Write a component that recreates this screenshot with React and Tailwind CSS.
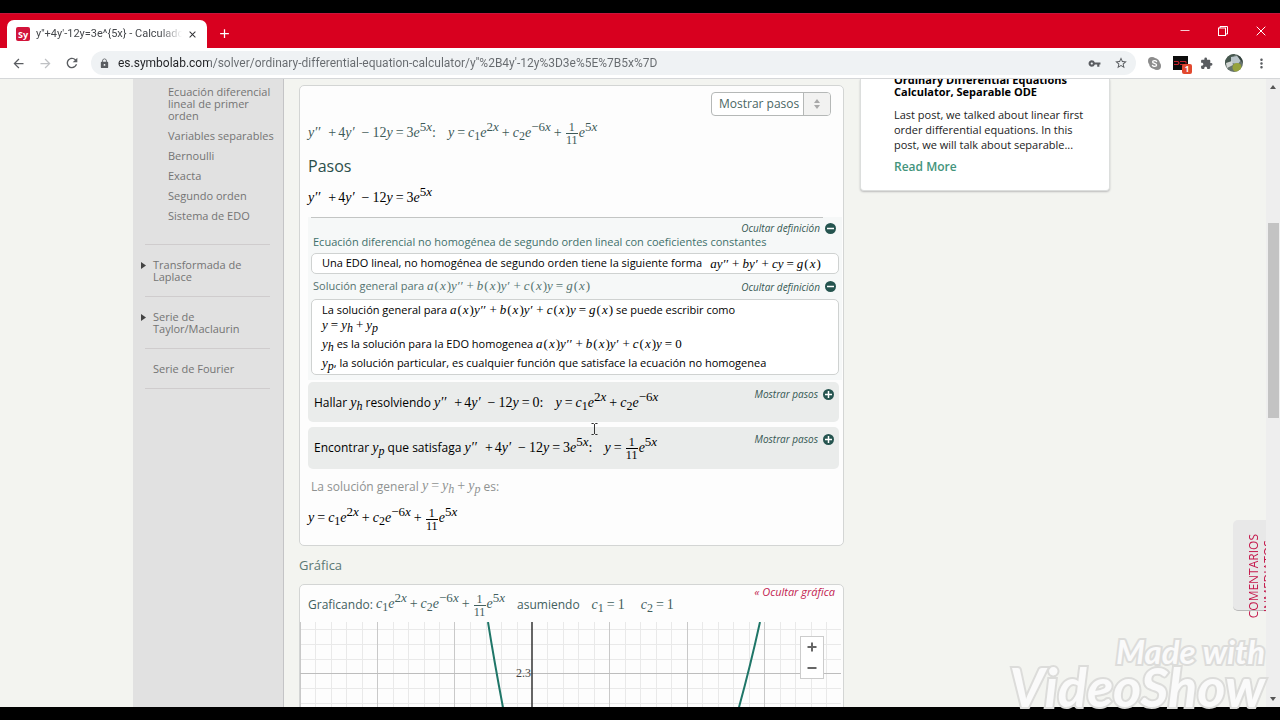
import React from "react";
import {
  MdArrowBack,
  MdArrowForward,
  MdRefresh,
  MdLock,
  MdVpnKey,
  MdStarBorder,
  MdExtension,
  MdMoreVert,
  MdAdd,
  MdClose,
} from "react-icons/md";

/* ---------- math notation ---------- */

function M({ children, small }) {
  return (
    <span
      className={
        small
          ? "whitespace-nowrap font-['Liberation_Serif',serif] text-[13px] leading-[13px] italic"
          : "whitespace-nowrap font-['Liberation_Serif',serif] text-[14px] leading-[14px] italic"
      }
    >
      {children}
    </span>
  );
}
const N = ({ children }) => <span className="not-italic">{children}</span>;
const Op = ({ children }) => <span className="mx-[3px] not-italic">{children}</span>;
const Sup = ({ children }) => (
  <span className="align-[6px] text-[13px] leading-none">{children}</span>
);
const Sub = ({ children }) => (
  <span className="align-[-3px] text-[12px] leading-none">{children}</span>
);
const Prime = ({ children }) => <span className="mr-[1px]">{children}</span>;

function Frac({ top, bottom }) {
  return (
    <span className="mx-px inline-flex flex-col items-center align-middle text-[12px] leading-[12px] not-italic">
      <span className="border-b border-current px-[3px]">{top}</span>
      <span>{bottom}</span>
    </span>
  );
}

const Fn = ({ name }) => (
  <>
    {name}
    <span className="ml-px not-italic">(</span>
    <span className="mx-px">x</span>
    <span className="not-italic">)</span>
  </>
);

const Exp = ({ n }) => (
  <>
    e<Sup><N>{n}</N>x</Sup>
  </>
);

const Lhs = () => (
  <>
    y<Prime>′′</Prime>
    <span className="ml-[7px] mr-[2px] not-italic">+</span>
    <N>4</N>y<Prime>′</Prime>
    <span className="ml-[6px] mr-[3px] not-italic">−</span>
    <N>12</N>y
  </>
);

const Terms = () => (
  <>
    c<Sub><N>1</N></Sub><Exp n="2" />
    <Op>+</Op>c<Sub><N>2</N></Sub><Exp n="−6" />
  </>
);

const Solution = () => (
  <>
    <Terms />
    <Op>+</Op>
    <Frac top="1" bottom="11" />
    <Exp n="5" />
  </>
);

const LinearForm = () => (
  <>
    <Fn name="a" />y<Prime>′′</Prime><Op>+</Op><Fn name="b" />y<Prime>′</Prime><Op>+</Op><Fn name="c" />y<Op>=</Op>
  </>
);

/* ---------- browser chrome ---------- */

function TabStrip() {
  return (
    <div className="flex h-[35px] shrink-0 items-end justify-between border-t border-[#c8143c] bg-[#d8001f] text-white">
      <div className="flex items-end">
        <div className="ml-[7px] flex h-[28px] w-[200px] items-center rounded-t-[7px] bg-white pl-[9px] pr-2 text-[#45484c]">
          <span className="flex size-[14px] shrink-0 items-center justify-center rounded-[2px] bg-[#d2143a] text-[9px] font-bold leading-none text-white">
            Sy
          </span>
          <span className="ml-[6px] w-[146px] overflow-hidden whitespace-nowrap font-['Roboto',sans-serif] text-[11px] [mask-image:linear-gradient(to_right,black_85%,transparent)]">
            y''+4y'-12y=3e^{"{5x}"} - Calculador
          </span>
          <button aria-label="Cerrar pestaña" className="ml-[5px] text-[#2f3033]">
            <MdClose size={11} />
          </button>
        </div>
        <button aria-label="Nueva pestaña" className="mb-[7px] ml-[10px]">
          <MdAdd size={15} />
        </button>
      </div>
      <div className="mb-[11px] mr-[14px] flex items-center gap-[28px]">
        <button aria-label="Minimizar">
          <svg width="10" height="12" viewBox="0 0 10 12" stroke="currentColor"><path d="M0.5 5.5h9" opacity=".8" /></svg>
        </button>
        <button aria-label="Restaurar">
          <svg width="10" height="10" viewBox="0 0 10 10" fill="none" stroke="currentColor">
            <rect x="0.5" y="2" width="7" height="7.5" />
            <path d="M2 2V0.5h7.5V8H7.5" />
          </svg>
        </button>
        <button aria-label="Cerrar">
          <svg width="10" height="10" viewBox="0 0 10 10" stroke="currentColor"><path d="M0.7 0.7l8.6 8.6M9.3 0.7L0.7 9.3" /></svg>
        </button>
      </div>
    </div>
  );
}

function Toolbar() {
  return (
    <div className="flex h-[31px] shrink-0 items-center border-b border-[#d5d7d9] bg-white pl-[11px] pr-[11px] text-[#5a5d61]">
      <button aria-label="Atrás"><MdArrowBack size={15} /></button>
      <button aria-label="Adelante" className="ml-3 text-[#bfc1c4]"><MdArrowForward size={15} /></button>
      <button aria-label="Recargar" className="ml-[11px]"><MdRefresh size={16} /></button>
      <div className="ml-[11px] flex h-[24px] flex-1 items-center rounded-full bg-[#eff2f4] pl-2 pr-2">
        <MdLock size={11} className="shrink-0" />
        <input
          aria-label="Dirección"
          defaultValue="es.symbolab.com/solver/ordinary-differential-equation-calculator/y''%2B4y'-12y%3D3e%5E%7B5x%7D"
          className="ml-2 min-w-0 flex-1 bg-[linear-gradient(to_right,#202124_91px,#666a6e_91px)] bg-clip-text font-['Roboto',sans-serif] text-[12px] text-transparent outline-none"
        />
        <button aria-label="Contraseñas"><MdVpnKey size={13} /></button>
        <button aria-label="Favorito" className="ml-[13px]"><MdStarBorder size={14} /></button>
      </div>
      <div className="ml-3 flex items-center gap-3">
        <button aria-label="Skype">
          <svg width="13" height="13" viewBox="0 0 13 13">
            <circle cx="4" cy="4" r="4" fill="#8c8c8c" />
            <circle cx="9" cy="9" r="4" fill="#8c8c8c" />
            <circle cx="6.5" cy="6.5" r="5.4" fill="#8c8c8c" />
            <path d="M8.6 4.6C8 3.2 4.6 3.2 4.6 5c0 1.700 4 1.100 4 3 0 1.900-3.600 1.800-4.200.3" fill="none" stroke="#fff" strokeWidth="1.300" strokeLinecap="round" />
          </svg>
        </button>
        <button aria-label="Extensión, 1 aviso" className="relative">
          <svg width="15" height="14" viewBox="0 0 15 14">
            <rect width="15" height="14" fill="#0c0c0c" />
            <path d="M1 5.500h4l1 1.500-1 1.500H1M7 5.500h6M7 8.500h4M13 5.500v2" fill="none" stroke="#c4222b" strokeWidth="1.200" />
          </svg>
          <span className="absolute left-[9px] top-[8px] flex size-[10px] items-center justify-center rounded-[2px] bg-[#e2492f] text-[8px] font-bold leading-none text-white">
            1
          </span>
        </button>
        <button aria-label="Extensiones"><MdExtension size={13} /></button>
        <button aria-label="Perfil">
          <svg width="18" height="18" viewBox="0 0 18 18">
            <clipPath id="avatar"><circle cx="9" cy="9" r="9" /></clipPath>
            <g clipPath="url(#avatar)">
              <rect width="18" height="18" fill="#66736d" />
              <path d="M0 0h10l-3 7-7 4z" fill="#46584f" />
              <path d="M6 3l6-1 4 4-3 4-7-1z" fill="#b8c4c9" />
              <path d="M1 9l6-2 1 4-6 3z" fill="#d2d6d4" />
              <circle cx="12" cy="13.500" r="4.500" fill="#96a23c" />
              <path d="M12 1l5 2 1 6-3-3z" fill="#34423e" />
            </g>
          </svg>
        </button>
        <button aria-label="Menú" className="-ml-px"><MdMoreVert size={15} /></button>
      </div>
    </div>
  );
}

/* ---------- page parts ---------- */

const subtopics = [
  "Ecuación diferencial lineal de primer orden",
  "Variables separables",
  "Bernoulli",
  "Exacta",
  "Segundo orden",
  "Sistema de EDO",
];

function Topic({ children, arrow }) {
  return (
    <a href="#" className="flex border-t border-[#cfcccd] pb-[13px] pt-[14px] leading-[12px]">
      <span className="w-2 shrink-0 pt-[3px]">
        {arrow && (
          <svg width="5" height="7" viewBox="0 0 5 7" fill="#444" className="-ml-1"><path d="M0 0l5 3.500L0 7z" /></svg>
        )}
      </span>
      <span>{children}</span>
    </a>
  );
}

function Sidebar() {
  return (
    <nav className="w-[151px] shrink-0 border-r border-[#c4c4c6] bg-[#e1e1e1] pl-3 pr-[13px] text-[11px] text-[#747474]">
      <ul className="-mr-3 flex flex-col gap-2 pb-[22px] pl-[23px] pt-[7px] leading-[12px]">
        {subtopics.map((t) => (
          <li key={t}><a href="#" className="block">{t}</a></li>
        ))}
      </ul>
      <Topic arrow>Transformada de Laplace</Topic>
      <Topic arrow>Serie de Taylor/Maclaurin</Topic>
      <Topic>Serie de Fourier</Topic>
      <div className="border-t border-[#cfcccd]" />
    </nav>
  );
}

function Toggle({ label, open }) {
  return (
    <button className="flex items-center gap-[5px] whitespace-nowrap text-[10px] italic leading-[12px] text-[#365854]">
      {label}
      <svg width="11" height="11" viewBox="0 0 11 11">
        <circle cx="5.500" cy="5.500" r="5.500" fill="#25544f" />
        <path d={open ? "M2 5.500h7" : "M2 5.500h7M5.500 2v7"} stroke="#fff" strokeWidth="1.500" />
      </svg>
    </button>
  );
}

function Steps() {
  return (
    <section className="rounded-[5px] border border-[#d3d5d4] bg-[#fdfdfd] pb-3">
      <div className="flex justify-end pr-3 pt-[6px]">
        <label className="flex h-6 items-stretch overflow-hidden rounded-[4px] border border-[#b5b8b7] bg-white">
          <select aria-label="Pasos" className="appearance-none bg-transparent pl-[7px] pr-[3px] text-[12px] text-[#4a6764] outline-none">
            <option>Mostrar pasos</option>
          </select>
          <span className="pointer-events-none flex w-[27px] items-center justify-center border-l border-[#b5b8b7] bg-[#f2f2f1]">
            <svg width="6" height="10" viewBox="0 0 6 10" fill="#a8a8a8"><path d="M3 0l3 4H0zM3 10l3-4H0z" /></svg>
          </span>
        </label>
      </div>
      <div className="flex h-[34px] items-center pl-2 text-[#3d5a58]">
        <M>
          <Lhs /><Op>=</Op><N>3</N><Exp n="5" /><N>:</N>
          <span className="ml-3">y</span><Op>=</Op><Solution />
        </M>
      </div>
      <h2 className="pl-2 text-[16px] leading-[32px] text-[#2c4f4b]">Pasos</h2>
      <div className="flex h-[35px] items-start pl-2 pt-[3px] text-black">
        <M><Lhs /><Op>=</Op><N>3</N><Exp n="5" /></M>
      </div>

      <div className="ml-2 mr-px bg-[#f6f8f8] px-[3px] pb-[5px]">
        <div className="mr-4 border-t border-[#c3c5c4]" />
        <div className="flex justify-end pr-[3px] pt-[4px]"><Toggle label="Ocultar definición" open /></div>
        <p className="pl-[2px] text-[11px] leading-[16px] text-[#3f706b]">
          Ecuación diferencial no homogénea de segundo orden lineal con coeficientes constantes
        </p>
        <div className="mt-[3px] flex h-[21px] items-center whitespace-nowrap rounded-[5px] border border-[#cfd2d1] bg-white pl-[10px] text-[11px] text-black">
          Una EDO lineal, no homogénea de segundo orden tiene la siguiente forma
          <span className="w-2" />
          <M small>ay<Prime>′′</Prime><Op>+</Op>by<Prime>′</Prime><Op>+</Op>cy<Op>=</Op><Fn name="g" /></M>
        </div>
        <div className="flex h-[25px] items-center justify-between pl-[2px] pr-[3px] text-[11px] text-[#557370]">
          <span>Solución general para <M small><LinearForm /><Fn name="g" /></M></span>
          <Toggle label="Ocultar definición" open />
        </div>
        <div className="flex flex-col rounded-[5px] border border-[#cfd2d1] bg-white py-[1px] pl-[10px] text-[11px] leading-[18px] text-black">
          <div className="h-[17px]">
            La solución general para <M small><LinearForm /><Fn name="g" /></M> se puede escribir como
          </div>
          <div className="h-[17px] leading-[14px]"><M small>y<Op>=</Op>y<Sub>h</Sub><Op>+</Op>y<Sub>p</Sub></M></div>
          <div className="h-[19px]">
            <M small>y<Sub>h</Sub></M> es la solución para la EDO homogenea <M small><LinearForm /><N>0</N></M>
          </div>
          <div className="h-[19px]">
            <M small>y<Sub>p</Sub></M>, la solución particular, es cualquier función que satisface la ecuación no homogenea
          </div>
        </div>
      </div>

      <div className="mt-[2px] flex flex-col gap-[5px] pl-2 pr-[4px] text-[12px] text-black">
        <div className="flex h-10 items-start justify-between rounded-[5px] bg-[#eaeceb] pl-[6px] pr-[5px] pt-[6px]">
          <span className="pt-[2px]">
            Hallar <M>y<Sub>h</Sub></M> resolviendo <M><Lhs /><Op>=</Op><N>0:</N><span className="ml-3">y</span><Op>=</Op><Terms /></M>
          </span>
          <Toggle label="Mostrar pasos" />
        </div>
        <div className="flex h-[42px] items-start justify-between rounded-[5px] bg-[#eaeceb] pl-[6px] pr-[5px] pt-[6px]">
          <span className="pt-[2px]">
            Encontrar <M>y<Sub>p</Sub></M> que satisfaga <M><Lhs /><Op>=</Op><N>3</N><Exp n="5" /><N>:</N><span className="ml-3">y</span><Op>=</Op><Frac top="1" bottom="11" /><Exp n="5" /></M>
          </span>
          <Toggle label="Mostrar pasos" />
        </div>
      </div>
      <p className="flex h-[35px] items-center whitespace-pre pl-[11px] text-[12px] text-[#8f9291]">
        La solución general <M>y<Op>=</Op>y<Sub>h</Sub><Op>+</Op>y<Sub>p</Sub></M> es:
      </p>
      <div className="flex h-[29px] items-center pl-2 text-black">
        <M>y<Op>=</Op><Solution /></M>
      </div>
    </section>
  );
}

const minorX = [15, 31, 46, 62, 93, 108, 124, 139, 170, 186, 201, 217, 247, 263, 278, 294, 325, 340, 356, 371, 402, 418, 433, 449, 480, 495, 511, 526];
const majorX = [0, 77, 154, 309, 387, 464];
const minorY = [7, 22, 37, 66, 81, 96];

function Graph() {
  return (
    <div className="relative">
      <svg width="541" height="110" viewBox="0 0 541 110" className="block max-w-full" fill="none">
        {minorX.map((x) => <path key={x} d={`M${x + 0.5} 0V110`} stroke="#e9e9e9" />)}
        {minorY.map((y) => <path key={y} d={`M0 ${y + 0.5}H541`} stroke="#e9e9e9" />)}
        {majorX.map((x) => <path key={x} d={`M${x + 0.5} 0V110`} stroke="#c9c9c9" />)}
        <path d="M0 51.500H541" stroke="#bdbdbd" />
        <path d="M232 0V110" stroke="#333" strokeWidth="1.500" />
        <text x="216" y="55" fontSize="12" fill="#444" fontFamily="Liberation Serif, serif">2.3</text>
        <path d="M188 0Q195 44 205 96" stroke="#1f7668" strokeWidth="2" />
        <path d="M460 0Q449 50 436 96" stroke="#1f7668" strokeWidth="2" />
      </svg>
      <div className="absolute right-[17px] top-[14px] flex h-[43px] w-6 flex-col items-center justify-around border border-[#cccccc] bg-white text-[#666]">
        <button aria-label="Acercar"><svg width="10" height="10" viewBox="0 0 10 10" stroke="currentColor" strokeWidth="2"><path d="M0.500 5h9M5 0.500v9" /></svg></button>
        <button aria-label="Alejar"><svg width="10" height="10" viewBox="0 0 10 10" stroke="currentColor" strokeWidth="2"><path d="M0.500 5h9" /></svg></button>
      </div>
    </div>
  );
}

function GraphCard() {
  return (
    <section className="rounded-[5px] border border-[#d3d5d4] bg-[#fdfdfd] pr-[2px]">
      <div className="flex h-[37px] justify-between pl-2 pr-[6px] text-[12px] text-[#42605e]">
        <div className="flex items-center whitespace-pre pt-[2px]">
          Graficando: <M><Solution /></M>
          <span className="ml-3">asumiendo</span>
          <span className="ml-3"><M>c<Sub><N>1</N></Sub><Op>=</Op><N>1</N></M></span>
          <span className="ml-4"><M>c<Sub><N>2</N></Sub><Op>=</Op><N>1</N></M></span>
        </div>
        <a href="#" className="text-[11px] italic leading-[14px] text-[#c22350]">« Ocultar gráfica</a>
      </div>
      <Graph />
    </section>
  );
}

function BlogCard() {
  return (
    <aside className="w-[250px] shrink-0 self-start rounded-b-[4px] border border-t-0 border-[#dcdedd] bg-white pb-[15px] pl-[33px] pr-6 shadow-[0_1px_2px_#bbbbbb]">
      <h3 className="-mt-[5px] text-[11px] font-bold leading-[12px] text-black">
        Ordinary Differential Equations Calculator, Separable ODE
      </h3>
      <p className="mt-[9px] text-[11px] leading-[15px] text-[#222]">
        Last post, we talked about linear first order differential equations. In this post, we will talk about separable...
      </p>
      <a href="#" className="mt-[7px] block text-[12px] font-semibold leading-[16px] text-[#43947c]">Read More</a>
    </aside>
  );
}

function Scrollbar() {
  return (
    <div className="flex w-[14px] shrink-0 flex-col items-center bg-[#eeeeee] py-[6px]">
      <svg width="6" height="4" viewBox="0 0 6 4" fill="#555"><path d="M3 0l3 4H0z" /></svg>
      <div className="mt-[134px] h-[195px] w-[11px] bg-[#c3c3c3]" />
      <svg width="6" height="4" viewBox="0 0 6 4" fill="#555" className="mt-auto"><path d="M3 4l3-4H0z" /></svg>
    </div>
  );
}

export default function App() {
  return (
    <div className="relative flex h-screen flex-col overflow-hidden bg-black py-[13px] font-['Open_Sans',sans-serif]">
      <TabStrip />
      <Toolbar />
      <div className="flex min-h-0 flex-1 bg-[#f3f4f0]">
        <div className="flex min-w-0 flex-1 overflow-hidden pl-[133px]">
          <Sidebar />
          <main className="ml-[15px] min-w-0 max-w-[545px] flex-1 pt-[6px]">
            <Steps />
            <h2 className="text-[13px] leading-[38px] text-[#5b7875]">Gráfica</h2>
            <GraphCard />
          </main>
          <div className="w-4 shrink-0" />
          <BlogCard />
        </div>
        <Scrollbar />
      </div>

      <button className="absolute right-[14px] top-[520px] flex h-[91px] w-[33px] items-start justify-end rounded-l-[5px] border-b border-[#b9b9b9] bg-[#e8e8e8] text-[#c4164a]">
        <span className="mt-2 flex h-[90px] w-[20px] shrink-0 items-end overflow-hidden">
          <span className="rotate-180 whitespace-nowrap text-[12px] leading-[15px] [writing-mode:vertical-rl]">
            COMENTARIOS<br />INMEDIATOS
          </span>
        </span>
      </button>

      <svg width="7" height="12" viewBox="0 0 7 12" fill="none" stroke="#333" className="pointer-events-none absolute left-[591px] top-[423px]">
        <path d="M0.500 0.500h2l1 1 1-1h2M3.500 1v10M0.500 11.500h2l1-1 1 1h2" />
      </svg>

      <div className="pointer-events-none absolute bottom-[15px] right-[15px] text-right font-['Lato',sans-serif] font-bold italic text-[#fafafa] [-webkit-text-stroke:4px_#dcdcda] [paint-order:stroke_fill]">
        <div className="text-[33px] leading-[36px]">Made with</div>
        <div className="text-[54px] leading-[36px]">VideoShow</div>
      </div>
    </div>
  );
}
